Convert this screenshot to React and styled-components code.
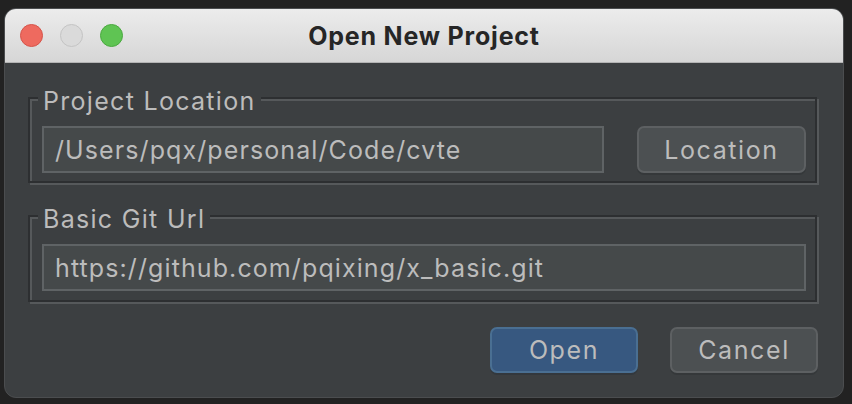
import styled, { createGlobalStyle } from "styled-components";

const GlobalStyle = createGlobalStyle`
  html, body {
    margin: 0;
    padding: 0;
    background: #222222;
  }
  * {
    box-sizing: border-box;
  }
`;

const Window = styled.div`
  margin: 8px 0 0 4px;
  width: 840px;
  height: 390px;
  border: 1px solid #4b4d4f;
  border-radius: 12px;
  overflow: hidden;
  background: #3c3f41;
  display: flex;
  flex-direction: column;
  font-family: Inter, "Liberation Sans", sans-serif;
`;

const TitleBar = styled.div`
  position: relative;
  height: 54px;
  flex: none;
  display: flex;
  align-items: center;
  justify-content: center;
  background: linear-gradient(#ececec, #d6d6d6);
  border-bottom: 1px solid #b4b4b4;
`;

const Lights = styled.div`
  position: absolute;
  left: 15px;
  top: 0;
  bottom: 0;
  display: flex;
  align-items: center;
  gap: 17px;
`;

const Light = styled.span`
  width: 23px;
  height: 23px;
  border-radius: 50%;
  background: ${(props) => props.fill};
  border: 1px solid ${(props) => props.edge};
`;

const Title = styled.div`
  font-size: 25px;
  font-weight: 700;
  color: #262626;
  letter-spacing: 0.8px;
`;

const Body = styled.div`
  flex: 1;
  padding: 18px 26px 0 23px;
  display: flex;
  flex-direction: column;
`;

const Group = styled.fieldset`
  margin: 0 0 ${(props) => props.gapBelow || 0}px;
  padding: 11px 9px ${(props) => props.padBottom}px 12px;
  border: 2px solid #2d2f31;
  box-shadow: inset 2px 2px 0 #56595b, 2px 2px 0 #56595b;
  min-width: 0;
`;

const Legend = styled.legend`
  padding: 6px 5px 0;
  margin-left: -4px;
  background: #3c3f41;
  color: #bcbcbc;
  font-size: 25px;
  line-height: 28px;
  letter-spacing: 1.3px;
`;

const Row = styled.div`
  display: flex;
  gap: 33px;
`;

const Field = styled.input`
  flex: 1;
  min-width: 0;
  height: 47px;
  margin: 0;
  padding: 0 11px;
  border: 2px solid #5f6365;
  background: #45494a;
  color: #bcbcbc;
  font-family: inherit;
  font-size: 25px;
  letter-spacing: 1.1px;
  outline: none;
`;

const Button = styled.button`
  width: ${(props) => props.w}px;
  height: ${(props) => props.h}px;
  margin: 0;
  padding: 0;
  border-radius: 7px;
  border: 2px solid ${(props) => (props.primary ? "#4a6f92" : "#5d6062")};
  background: ${(props) => (props.primary ? "#375880" : "#4c5052")};
  box-shadow: 0 2px 0 ${(props) => (props.primary ? "#33383d" : "#35383a")};
  color: #bcbcbc;
  font-family: inherit;
  font-size: 25px;
  letter-spacing: 1.6px;
  cursor: default;
`;

const Actions = styled.div`
  margin-top: 25px;
  display: flex;
  justify-content: flex-end;
  gap: 32px;
  margin-right: -1px;
`;

const App = () => {
  return (
    <>
      <GlobalStyle />
      <Window>
        <TitleBar>
          <Lights>
            <Light fill="#ee6a5f" edge="#d5544a" />
            <Light fill="#dadada" edge="#c4c4c4" />
            <Light fill="#5fc453" edge="#4aa93f" />
          </Lights>
          <Title>Open New Project</Title>
        </TitleBar>
        <Body>
          <Group gapBelow={16} padBottom={8}>
            <Legend>Project Location</Legend>
            <Row>
              <Field readOnly value="/Users/pqx/personal/Code/cvte" />
              <Button w={169} h={47}>
                Location
              </Button>
            </Row>
          </Group>
          <Group padBottom={9}>
            <Legend>Basic Git Url</Legend>
            <Row>
              <Field readOnly value="https://github.com/pqixing/x_basic.git" />
            </Row>
          </Group>
          <Actions>
            <Button primary w={148} h={46}>
              Open
            </Button>
            <Button w={148} h={46}>
              Cancel
            </Button>
          </Actions>
        </Body>
      </Window>
    </>
  );
};

export default App;
